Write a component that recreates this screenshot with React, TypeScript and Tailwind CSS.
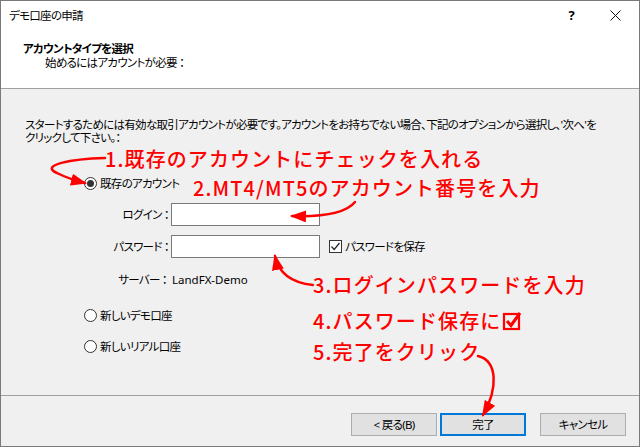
import React from "react";

const Radio = ({ checked }: { checked?: boolean }) => (
  <span className="w-[13px] h-[13px] rounded-full border border-[#333] bg-white flex items-center justify-center shrink-0">
    {checked && <span className="w-[7px] h-[7px] rounded-full bg-[#333]" />}
  </span>
);

const Btn = ({ children, primary }: { children: React.ReactNode; primary?: boolean }) => (
  <div
    className={
      "w-[86px] h-[23px] flex items-center justify-center bg-[#e1e1e1] text-black " +
      (primary ? "border-2 border-[#0078d7]" : "border border-[#adadad]")
    }
  >
    {children}
  </div>
);

export default function App() {
  return (
    <div className="w-[640px] h-[447px] border border-[#7a7a7a] flex flex-col relative bg-[#f0f0f0] overflow-hidden font-['Noto_Sans','Noto_Sans_CJK_JP',sans-serif] [font-feature-settings:'palt'] text-[11.5px] tracking-[-0.7px] text-black leading-[13px]">
      {/* header */}
      <div className="bg-white h-[87px] flex flex-col shrink-0">
        <div className="h-[29px] flex items-center justify-between pl-[8px] pr-[18px]">
          <span>デモ口座の申請</span>
          <div className="flex items-center gap-[36px]">
            <span className="text-[13px] font-bold">?</span>
            <svg width="11" height="11" viewBox="0 0 11 11">
              <path d="M0.5 0.5 L10.5 10.5 M10.5 0.5 L0.5 10.5" stroke="#111" strokeWidth="1" />
            </svg>
          </div>
        </div>
        <div className="pl-[22px] mt-[12px] font-bold">アカウントタイプを選択</div>
        <div className="pl-[44px] mt-[1px]">始めるにはアカウントが必要 ：</div>
      </div>
      <div className="h-px bg-[#a0a0a0] shrink-0" />
      {/* body */}
      <div className="flex-1 flex flex-col pl-[24px]">
        <p className="mt-[29px] whitespace-nowrap">
          スタートするためには有効な取引アカウントが必要です。アカウントをお持ちでない場合、下記のオプションから選択し、'次へ'を
          <br />
          クリックして下さい。：
        </p>
        <div className="mt-[31px] h-[16px] flex items-center ml-[59px] gap-[3px]">
          <Radio checked />
          <span>既存のアカウント</span>
        </div>
        <div className="mt-[12px] h-[23px] flex items-center">
          <span className="w-[144px] text-right">ログイン ：</span>
          <div className="ml-[2px] w-[149px] h-[23px] bg-white border border-[#7a7a7a]" />
        </div>
        <div className="mt-[9px] h-[23px] flex items-center">
          <span className="w-[144px] text-right">パスワード ：</span>
          <div className="ml-[2px] w-[149px] h-[23px] bg-white border border-[#7a7a7a]" />
          <span className="ml-[9px] w-[13px] h-[13px] border border-[#333] bg-white flex items-center justify-center">
            <svg width="11" height="11" viewBox="0 0 11 11">
              <path d="M1.5 5.5 L4.2 8.5 L9.5 2" stroke="#222" strokeWidth="1.2" fill="none" />
            </svg>
          </span>
          <span className="ml-[3px]">パスワードを保存</span>
        </div>
        <div className="mt-[13px] h-[16px] flex items-center">
          <span className="w-[142px] text-right">サーバー ：</span>
          <span className="ml-[5px] tracking-normal">LandFX-Demo</span>
        </div>
        <div className="mt-[20px] h-[16px] flex items-center ml-[59px] gap-[3px]">
          <Radio />
          <span>新しいデモ口座</span>
        </div>
        <div className="mt-[15px] h-[16px] flex items-center ml-[59px] gap-[3px]">
          <Radio />
          <span>新しいリアル口座</span>
        </div>
      </div>
      <div className="h-px bg-[#a0a0a0] shrink-0" />
      {/* footer */}
      <div className="h-[50px] shrink-0 flex justify-end items-start pt-[17px] pr-[13px]">
        <Btn>&lt; 戻る(B)</Btn>
        <div className="ml-[3px]">
          <Btn primary>完了</Btn>
        </div>
        <div className="ml-[14px]">
          <Btn>キャンセル</Btn>
        </div>
      </div>

      {/* annotations */}
      <div className="absolute inset-0 pointer-events-none font-['Noto_Sans_CJK_JP',sans-serif] [font-feature-settings:normal] text-[20px] leading-[24px] text-[#ff0000] font-medium tracking-[1.1px] whitespace-nowrap">
        <div className="absolute left-[104px] top-[146px]">1.既存のアカウントにチェックを入れる</div>
        <div className="absolute left-[192px] top-[175px]">2.MT4/MT5のアカウント番号を入力</div>
        <div className="absolute left-[312px] top-[272px]">3.ログインパスワードを入力</div>
        <div className="absolute left-[312px] top-[308px] flex items-center">
          4.パスワード保存に
          <svg width="20" height="20" viewBox="0 0 20 20" className="ml-[1px]">
            <rect x="2" y="3" width="15" height="15" fill="none" stroke="#ff0000" strokeWidth="2.2" />
            <path d="M5 10 L9 14.5 L18 2" fill="none" stroke="#ff0000" strokeWidth="3" />
          </svg>
        </div>
        <div className="absolute left-[312px] top-[339px]">5.完了をクリック</div>
      </div>
      <svg className="absolute inset-0 pointer-events-none" width="640" height="447" viewBox="0 0 640 447">
        <defs>
          <marker id="ah" markerUnits="userSpaceOnUse" markerWidth="16" markerHeight="12" refX="14" refY="6" orient="auto">
            <path d="M0 0 L16 6 L0 12 Z" fill="#ff0000" />
          </marker>
        </defs>
        <g fill="none" stroke="#ff0000" strokeWidth="2.5" strokeLinecap="round">
          <path d="M104 157 C 70 158, 38 164, 56 172 C 64 176, 72 179, 84 182" markerEnd="url(#ah)" />
          <path d="M354 201 C 345 212, 322 216, 291 215" markerEnd="url(#ah)" />
          <path d="M312 284 C 292 282, 278 274, 274 255" markerEnd="url(#ah)" />
          <path d="M477 355 C 497 360, 497 388, 482 414" markerEnd="url(#ah)" />
        </g>
      </svg>
    </div>
  );
}
